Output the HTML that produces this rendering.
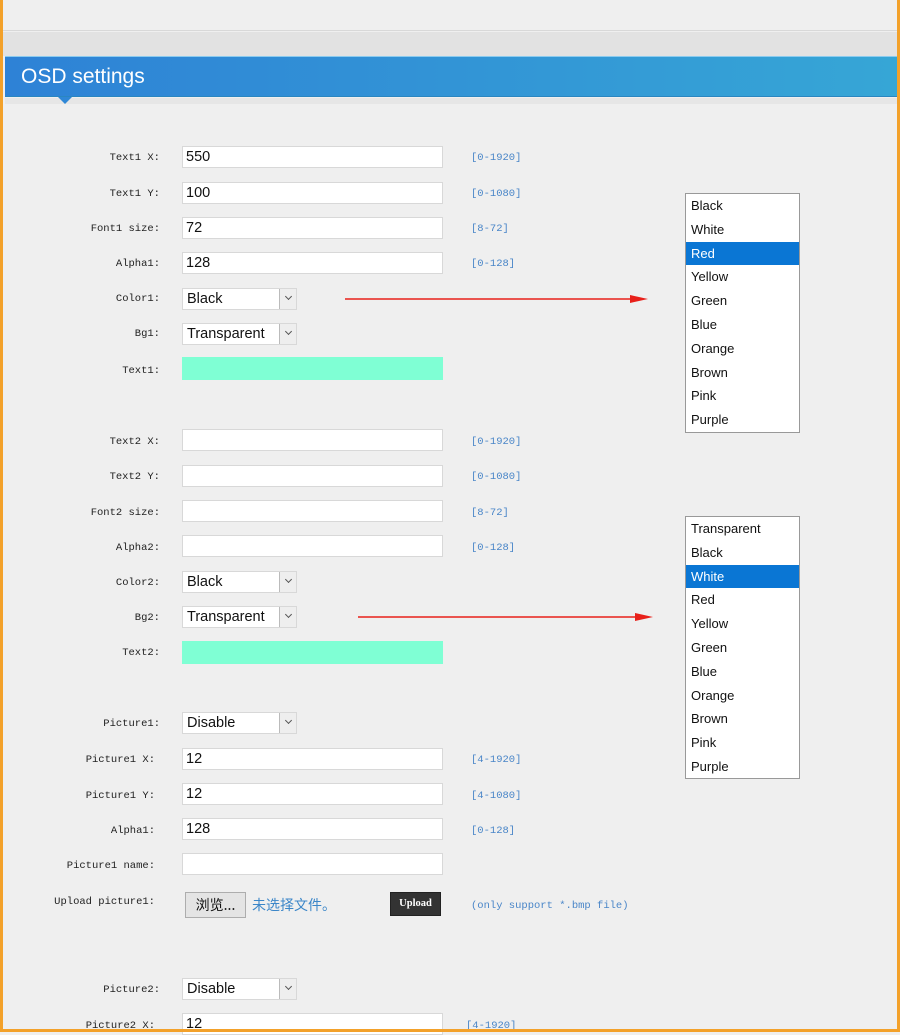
<!DOCTYPE html>
<html><head><meta charset="utf-8"><style>
*{margin:0;padding:0;box-sizing:border-box}
body{width:900px;height:1032px;overflow:hidden;background:#efefef;position:relative;font-family:"Liberation Sans",sans-serif}
.ob{position:absolute;background:#f3a12a}
.l{position:absolute;width:160px;text-align:right;font:10.5px "Liberation Mono",monospace;color:#222;line-height:14px}
.i{position:absolute;left:182px;width:261px;height:22px;background:#fff;border:1px solid #d8d8d8;font-size:14.5px;line-height:21px;padding-left:3px;color:#111}
.h{position:absolute;left:471px;font:10.5px "Liberation Mono",monospace;color:#4a86c8;line-height:14px}
.s{position:absolute;left:182px;width:115px;height:22px;background:#fff;border:1px solid #d8d8d8;font-size:14.5px;line-height:21px;padding-left:4px;color:#111}
.s:after{content:"";position:absolute;right:0;top:0;width:16px;height:20px;background:#eee;border-left:1px solid #bbb}
.s i{position:absolute;right:5px;top:5px;width:5px;height:5px;border-right:1px solid #555;border-bottom:1px solid #555;transform:rotate(45deg);z-index:2}
.t{position:absolute;left:182px;width:261px;height:23px;background:#7fffd4}
.dd{position:absolute;left:685px;width:115px;background:#fff;border:1px solid #999}
.dd div{height:23.8px;line-height:23.8px;padding-left:5px;font-size:13px;color:#111}
.dd .sel{background:#0a76d4;color:#fff}
</style></head><body>
<div style="position:absolute;left:3px;top:0;width:894px;height:31px;background:#efefef;border-bottom:1px solid #d8d8d8"></div>
<div style="position:absolute;left:3px;top:32px;width:894px;height:24px;background:#e2e2e2"></div>
<div style="position:absolute;left:5px;top:56px;width:893px;height:41px;background:linear-gradient(90deg,#2e82d6,#36a6d6);border-top:1px solid #8ccbee;border-bottom:1px solid #2a86c0"></div>
<div style="position:absolute;left:21px;top:64px;color:#fff;font-size:21px;line-height:26px">OSD settings</div>
<div style="position:absolute;left:5px;top:98px;width:893px;height:6px;background:#e6e6e6"></div>
<div style="position:absolute;left:58px;top:97px;width:0;height:0;border-left:7px solid transparent;border-right:7px solid transparent;border-top:7px solid #2f87d6"></div>

<div class="l" style="top:151px">Text1 X:</div><div class="i" style="top:146px">550</div><div class="h" style="top:151px">[0-1920]</div>
<div class="l" style="top:187px">Text1 Y:</div><div class="i" style="top:182px">100</div><div class="h" style="top:187px">[0-1080]</div>
<div class="l" style="top:222px">Font1 size:</div><div class="i" style="top:217px">72</div><div class="h" style="top:222px">[8-72]</div>
<div class="l" style="top:257px">Alpha1:</div><div class="i" style="top:252px">128</div><div class="h" style="top:257px">[0-128]</div>
<div class="l" style="top:292px">Color1:</div><div class="s" style="top:288px">Black<i></i></div>
<div class="l" style="top:327px">Bg1:</div><div class="s" style="top:323px">Transparent<i></i></div>
<div class="l" style="top:364px">Text1:</div><div class="t" style="top:357px"></div>

<div class="l" style="top:435px">Text2 X:</div><div class="i" style="top:429px"></div><div class="h" style="top:435px">[0-1920]</div>
<div class="l" style="top:470px">Text2 Y:</div><div class="i" style="top:465px"></div><div class="h" style="top:470px">[0-1080]</div>
<div class="l" style="top:506px">Font2 size:</div><div class="i" style="top:500px"></div><div class="h" style="top:506px">[8-72]</div>
<div class="l" style="top:541px">Alpha2:</div><div class="i" style="top:535px"></div><div class="h" style="top:541px">[0-128]</div>
<div class="l" style="top:576px">Color2:</div><div class="s" style="top:571px">Black<i></i></div>
<div class="l" style="top:611px">Bg2:</div><div class="s" style="top:606px">Transparent<i></i></div>
<div class="l" style="top:646px">Text2:</div><div class="t" style="top:641px"></div>

<div class="l" style="width:160px;top:717px">Picture1:</div><div class="s" style="top:712px">Disable<i></i></div>
<div class="l" style="width:155px;top:753px">Picture1 X:</div><div class="i" style="top:748px">12</div><div class="h" style="top:753px">[4-1920]</div>
<div class="l" style="width:155px;top:789px">Picture1 Y:</div><div class="i" style="top:783px">12</div><div class="h" style="top:789px">[4-1080]</div>
<div class="l" style="width:155px;top:824px">Alpha1:</div><div class="i" style="top:818px">128</div><div class="h" style="top:824px">[0-128]</div>
<div class="l" style="width:155px;top:859px">Picture1 name:</div><div class="i" style="top:853px"></div>
<div class="l" style="width:155px;top:895px">Upload picture1:</div>
<div style="position:absolute;left:185px;top:892px;width:61px;height:26px;background:#e4e4e4;border:1px solid #adadad;font:14px 'Noto Sans CJK SC',sans-serif;line-height:24px;text-align:center;color:#111">浏览...</div>
<div style="position:absolute;left:252px;top:895px;font:14px 'Noto Sans CJK SC',sans-serif;color:#3b86c8;line-height:20px">未选择文件。</div>
<div style="position:absolute;left:390px;top:892px;width:51px;height:24px;background:#333;border:1px solid #222;color:#fff;font:bold 10.5px 'Liberation Serif',serif;line-height:22px;text-align:center">Upload</div>
<div style="position:absolute;left:471px;top:900px;font:10.5px 'Liberation Mono',monospace;color:#4a86c8">(only support *.bmp file)</div>

<div class="l" style="width:160px;top:983px">Picture2:</div><div class="s" style="top:978px">Disable<i></i></div>
<div class="l" style="width:155px;top:1019px">Picture2 X:</div><div class="i" style="top:1013px">12</div><div class="h" style="top:1019px;left:466px">[4-1920]</div>

<div class="dd" style="top:193px;height:240px">
<div>Black</div><div>White</div><div class="sel">Red</div><div>Yellow</div><div>Green</div><div>Blue</div><div>Orange</div><div>Brown</div><div>Pink</div><div>Purple</div></div>
<div class="dd" style="top:516px;height:263px">
<div>Transparent</div><div>Black</div><div class="sel">White</div><div>Red</div><div>Yellow</div><div>Green</div><div>Blue</div><div>Orange</div><div>Brown</div><div>Pink</div><div>Purple</div></div>

<svg style="position:absolute;left:0;top:0" width="900" height="1032">
<line x1="345" y1="299" x2="636" y2="299" stroke="#e8201a" stroke-width="1.5"/><polygon points="648,299 630,295 630,303" fill="#e8201a"/>
<line x1="358" y1="617" x2="641" y2="617" stroke="#e8201a" stroke-width="1.5"/><polygon points="653,617 635,613 635,621" fill="#e8201a"/>
</svg>
<div class="ob" style="left:0;top:0;width:3px;height:1032px"></div>
<div class="ob" style="right:0;top:0;width:3px;height:1032px"></div>
<div class="ob" style="left:0;top:1029px;width:900px;height:3px"></div>
</body></html>
